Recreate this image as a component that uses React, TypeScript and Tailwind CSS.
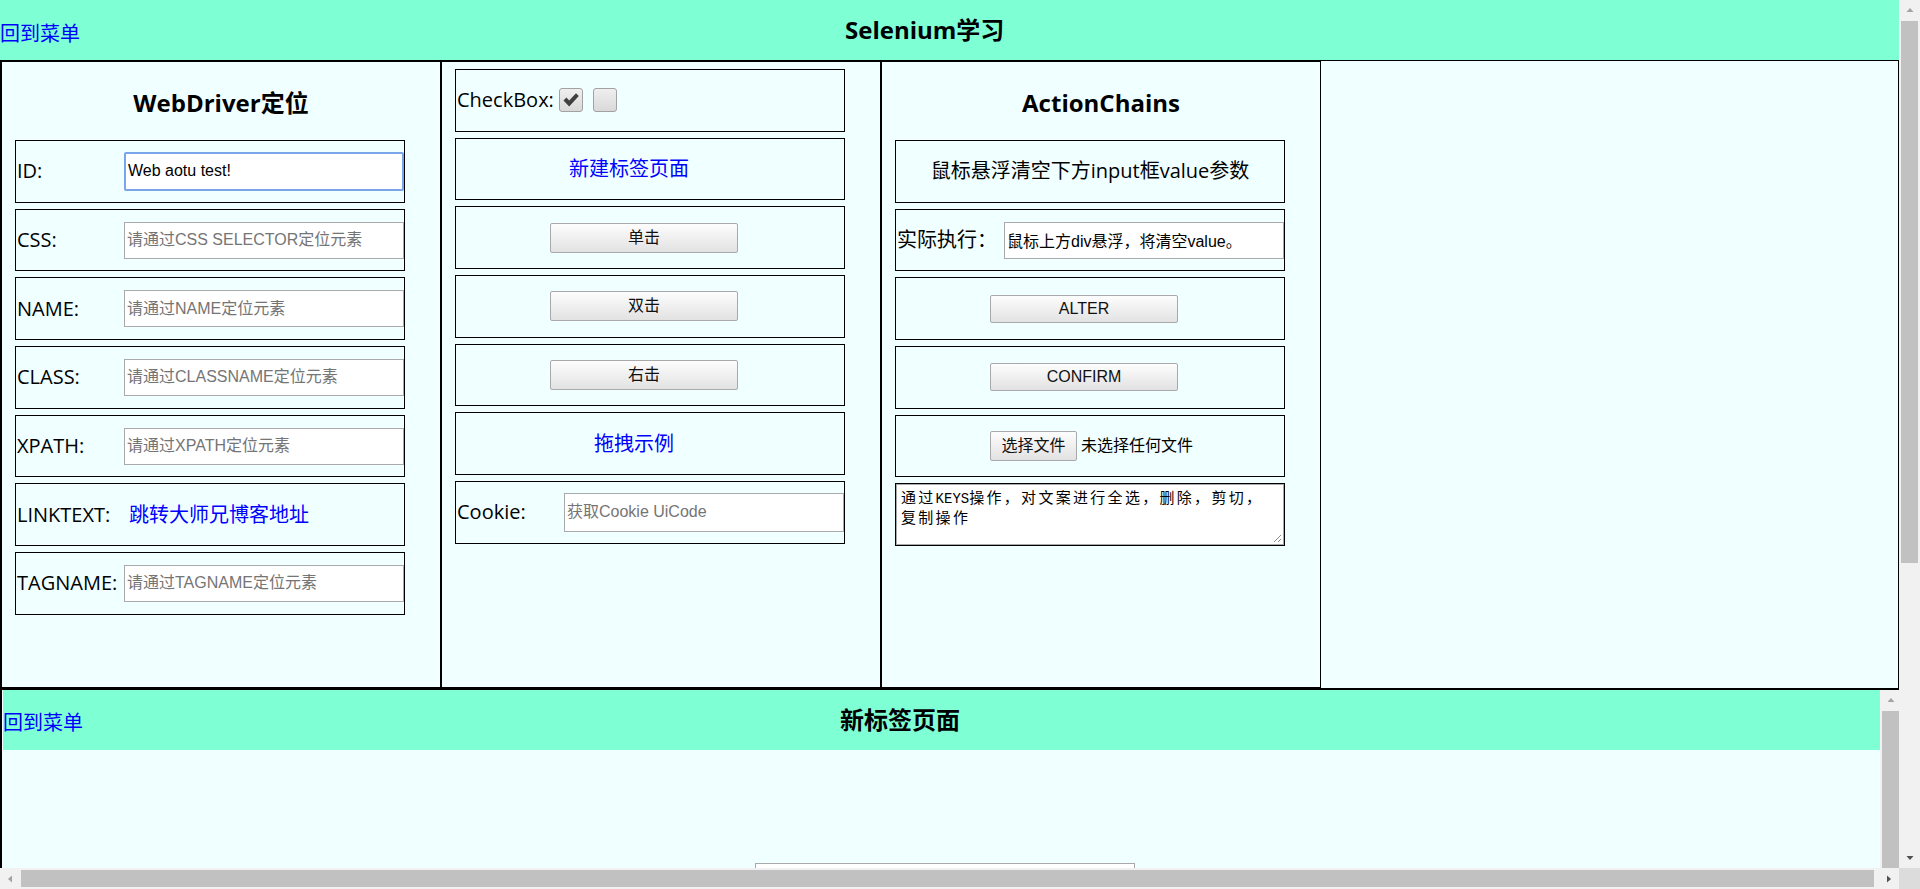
import React from "react";

const sans = "font-['Open_Sans','Noto_Sans_CJK_SC',sans-serif]";
const arial = "font-['Liberation_Sans','Noto_Sans_CJK_SC',sans-serif]";

function Box({ children, className = "" }: { children?: React.ReactNode; className?: string }) {
  return (
    <div className={`ml-[13px] w-[390px] h-[62.7px] mb-[6px] border border-black flex items-center shrink-0 ${className}`}>
      {children}
    </div>
  );
}

function Label({ children }: { children: React.ReactNode }) {
  return <span className="w-[108px] pl-[1px] shrink-0 text-[20px] text-black whitespace-nowrap">{children}</span>;
}

function TextInput({ placeholder, value, className = "" }: { placeholder?: string; value?: string; className?: string }) {
  return (
    <input
      readOnly
      placeholder={placeholder}
      defaultValue={value}
      className={`w-[280px] h-[37px] border border-[#a9a9a9] bg-white px-[2px] text-[16px] text-black placeholder:text-[#757575] outline-none ${arial} ${className}`}
    />
  );
}

function Btn({ children, className = "" }: { children: React.ReactNode; className?: string }) {
  return (
    <div
      className={`ml-[94px] w-[188px] flex items-center justify-center border border-[#a9a9a9] rounded-[2px] bg-linear-to-b from-[#fdfdfd] to-[#e2e2e2] text-[16px] text-[#111] ${arial} ${className}`}
    >
      {children}
    </div>
  );
}

function Checkbox({ checked }: { checked?: boolean }) {
  return (
    <div className="w-[24px] h-[24px] rounded-[3px] border border-[#a2a2a2] bg-linear-to-b from-[#efefef] to-[#d9d9d9] flex items-center justify-center shrink-0">
      {checked && (
        <svg width="20" height="20" viewBox="0 0 20 20">
          <path d="M2.5 10.5 L5.4 7.6 L8.2 10.6 L15 3.2 L17.8 6 L8.2 16.4 Z" fill="#404040" />
        </svg>
      )}
    </div>
  );
}

function Tri({ dir, color }: { dir: "up" | "down" | "left" | "right"; color: string }) {
  const d =
    dir === "up"
      ? "M0.5 5 L4 1 L7.5 5 Z"
      : dir === "down"
      ? "M0.5 2 L4 6 L7.5 2 Z"
      : dir === "left"
      ? "M5 0.5 L1 4 L5 7.5 Z"
      : "M2 0.5 L6 4 L2 7.5 Z";
  return (
    <svg width="8" height="8" viewBox="0 0 8 8">
      <path d={d} fill={color} />
    </svg>
  );
}

export default function App() {
  return (
    <div className={`w-[1920px] h-[889px] overflow-hidden flex bg-[#f0ffff] text-black ${sans}`}>
      {/* page area */}
      <div className="w-[1899px] h-[889px] flex flex-col shrink-0">
        {/* header */}
        <div className="h-[60px] bg-[#7fffd4] flex items-center shrink-0">
          <a className="w-[80px] mt-[7px] text-[20px] text-[#0000ff] whitespace-nowrap">回到菜单</a>
          <h1 className="ml-[765px] text-[24px] font-bold whitespace-nowrap">Selenium学习</h1>
        </div>

        {/* main container */}
        <div className="h-[629px] border border-black flex shrink-0 bg-[#f0ffff]">
          {/* column 1 */}
          <div className="w-[440px] h-[627px] border border-black shrink-0 flex flex-col">
            <div className="h-[78px] pt-[4px] flex items-center justify-center text-[24px] font-bold shrink-0">
              WebDriver定位
            </div>
            <Box>
              <Label>ID:</Label>
              <input
                readOnly
                defaultValue="Web aotu test!"
                className={`w-[280px] h-[39px] border-2 border-[#7aa5ea] rounded-[2px] bg-white px-[2px] text-[16px] text-black outline-none ${arial}`}
              />
            </Box>
            <Box>
              <Label>CSS:</Label>
              <TextInput placeholder="请通过CSS SELECTOR定位元素" />
            </Box>
            <Box>
              <Label>NAME:</Label>
              <TextInput placeholder="请通过NAME定位元素" />
            </Box>
            <Box>
              <Label>CLASS:</Label>
              <TextInput placeholder="请通过CLASSNAME定位元素" />
            </Box>
            <Box>
              <Label>XPATH:</Label>
              <TextInput placeholder="请通过XPATH定位元素" />
            </Box>
            <Box>
              <Label>LINKTEXT:</Label>
              <a className="ml-[5px] text-[20px] text-[#0000ff] whitespace-nowrap">跳转大师兄博客地址</a>
            </Box>
            <Box>
              <Label>TAGNAME:</Label>
              <TextInput placeholder="请通过TAGNAME定位元素" />
            </Box>
          </div>

          {/* column 2 */}
          <div className="w-[440px] h-[627px] border border-black shrink-0 flex flex-col pt-[7px]">
            <Box>
              <span className="w-[103px] pl-[1px] shrink-0 text-[20px] whitespace-nowrap">CheckBox:</span>
              <Checkbox checked />
              <div className="w-[10px]" />
              <Checkbox />
            </Box>
            <Box>
              <a className="pl-[113px] text-[20px] text-[#0000ff] whitespace-nowrap">新建标签页面</a>
            </Box>
            <Box>
              <Btn className="h-[30px]">单击</Btn>
            </Box>
            <Box>
              <Btn className="h-[30px]">双击</Btn>
            </Box>
            <Box>
              <Btn className="h-[30px]">右击</Btn>
            </Box>
            <Box>
              <a className="pl-[138px] text-[20px] text-[#0000ff] whitespace-nowrap">拖拽示例</a>
            </Box>
            <Box>
              <Label>Cookie:</Label>
              <TextInput placeholder="获取Cookie UiCode" className="h-[39px]" />
            </Box>
          </div>

          {/* column 3 */}
          <div className="w-[440px] h-[627px] border border-black shrink-0 flex flex-col">
            <div className="h-[78px] pt-[4px] flex items-center justify-center text-[24px] font-bold shrink-0">
              ActionChains
            </div>
            <Box className="justify-center">
              <span className="text-[20px] whitespace-nowrap">鼠标悬浮清空下方input框value参数</span>
            </Box>
            <Box>
              <Label>实际执行：</Label>
              <TextInput value="鼠标上方div悬浮，将清空value。" />
            </Box>
            <Box>
              <Btn className="h-[28px]">ALTER</Btn>
            </Box>
            <Box>
              <Btn className="h-[28px]">CONFIRM</Btn>
            </Box>
            <Box>
              <div
                className={`ml-[94px] w-[87px] h-[30px] flex items-center justify-center border border-[#a9a9a9] rounded-[2px] bg-linear-to-b from-[#fdfdfd] to-[#e2e2e2] text-[16px] text-[#111] ${arial}`}
              >
                选择文件
              </div>
              <span className={`ml-[4px] text-[16px] text-black whitespace-nowrap ${arial}`}>未选择任何文件</span>
            </Box>
            <Box className="items-stretch">
              <div className="relative flex-1 border border-[#a9a9a9] bg-white px-[4px] pt-[3px]">
                <div className="text-[15px] leading-[18px] tracking-[2.3px] font-['Noto_Sans_CJK_SC',monospace] whitespace-pre text-black">
                  通过<span className="font-['Liberation_Mono',monospace] text-[14px] tracking-normal">KEYS</span>
                  操作，对文案进行全选，删除，剪切，{"\n"}复制操作
                </div>
                <svg className="absolute right-[1px] bottom-[1px]" width="10" height="10" viewBox="0 0 10 10">
                  <path d="M9 2 L2 9 M9 6 L6 9" stroke="#8a8a8a" strokeWidth="1" />
                </svg>
              </div>
            </Box>
          </div>
        </div>

        {/* iframe */}
        <div className="h-[179px] border-t border-black border-l-2 flex shrink-0 overflow-hidden">
          <div className="flex-1 pl-[1px] overflow-hidden flex flex-col bg-[#f0ffff]">
            <div className="h-[60px] bg-[#7fffd4] flex items-center shrink-0">
              <a className="w-[80px] mt-[5px] text-[20px] text-[#0000ff] whitespace-nowrap">回到菜单</a>
              <h2 className="ml-[757px] text-[24px] font-bold whitespace-nowrap">新标签页面</h2>
            </div>
            <div className="pt-[113px] pl-[752px]">
              <div className="w-[380px] h-[30px] border border-[#a9a9a9] bg-white" />
            </div>
          </div>
          {/* iframe vertical scrollbar */}
          <div className="w-[19px] bg-[#f1f1f1] flex flex-col shrink-0">
            <div className="h-[21px] flex items-center justify-center pl-[2px]">
              <Tri dir="up" color="#a3a3a3" />
            </div>
            <div className="flex-1 ml-[2px] bg-[#c1c1c1]" />
          </div>
        </div>

        {/* horizontal scrollbar */}
        <div className="h-[21px] bg-[#f1f1f1] flex items-center shrink-0">
          <div className="w-[21px] flex items-center justify-center">
            <Tri dir="left" color="#a3a3a3" />
          </div>
          <div className="w-[1853px] h-[17px] bg-[#c1c1c1]" />
          <div className="flex-1" />
          <div className="w-[21px] flex items-center justify-center">
            <Tri dir="right" color="#505050" />
          </div>
        </div>
      </div>

      {/* window vertical scrollbar */}
      <div className="w-[21px] h-[889px] flex flex-col shrink-0">
        <div className="h-[868px] bg-[#f1f1f1] flex flex-col">
          <div className="h-[21px] flex items-center justify-center">
            <Tri dir="up" color="#a3a3a3" />
          </div>
          <div className="h-[542px] mx-[2px] bg-[#c1c1c1]" />
          <div className="flex-1" />
          <div className="h-[21px] flex items-center justify-center">
            <Tri dir="down" color="#505050" />
          </div>
        </div>
        <div className="h-[21px] bg-[#dcdcdc]" />
      </div>
    </div>
  );
}
